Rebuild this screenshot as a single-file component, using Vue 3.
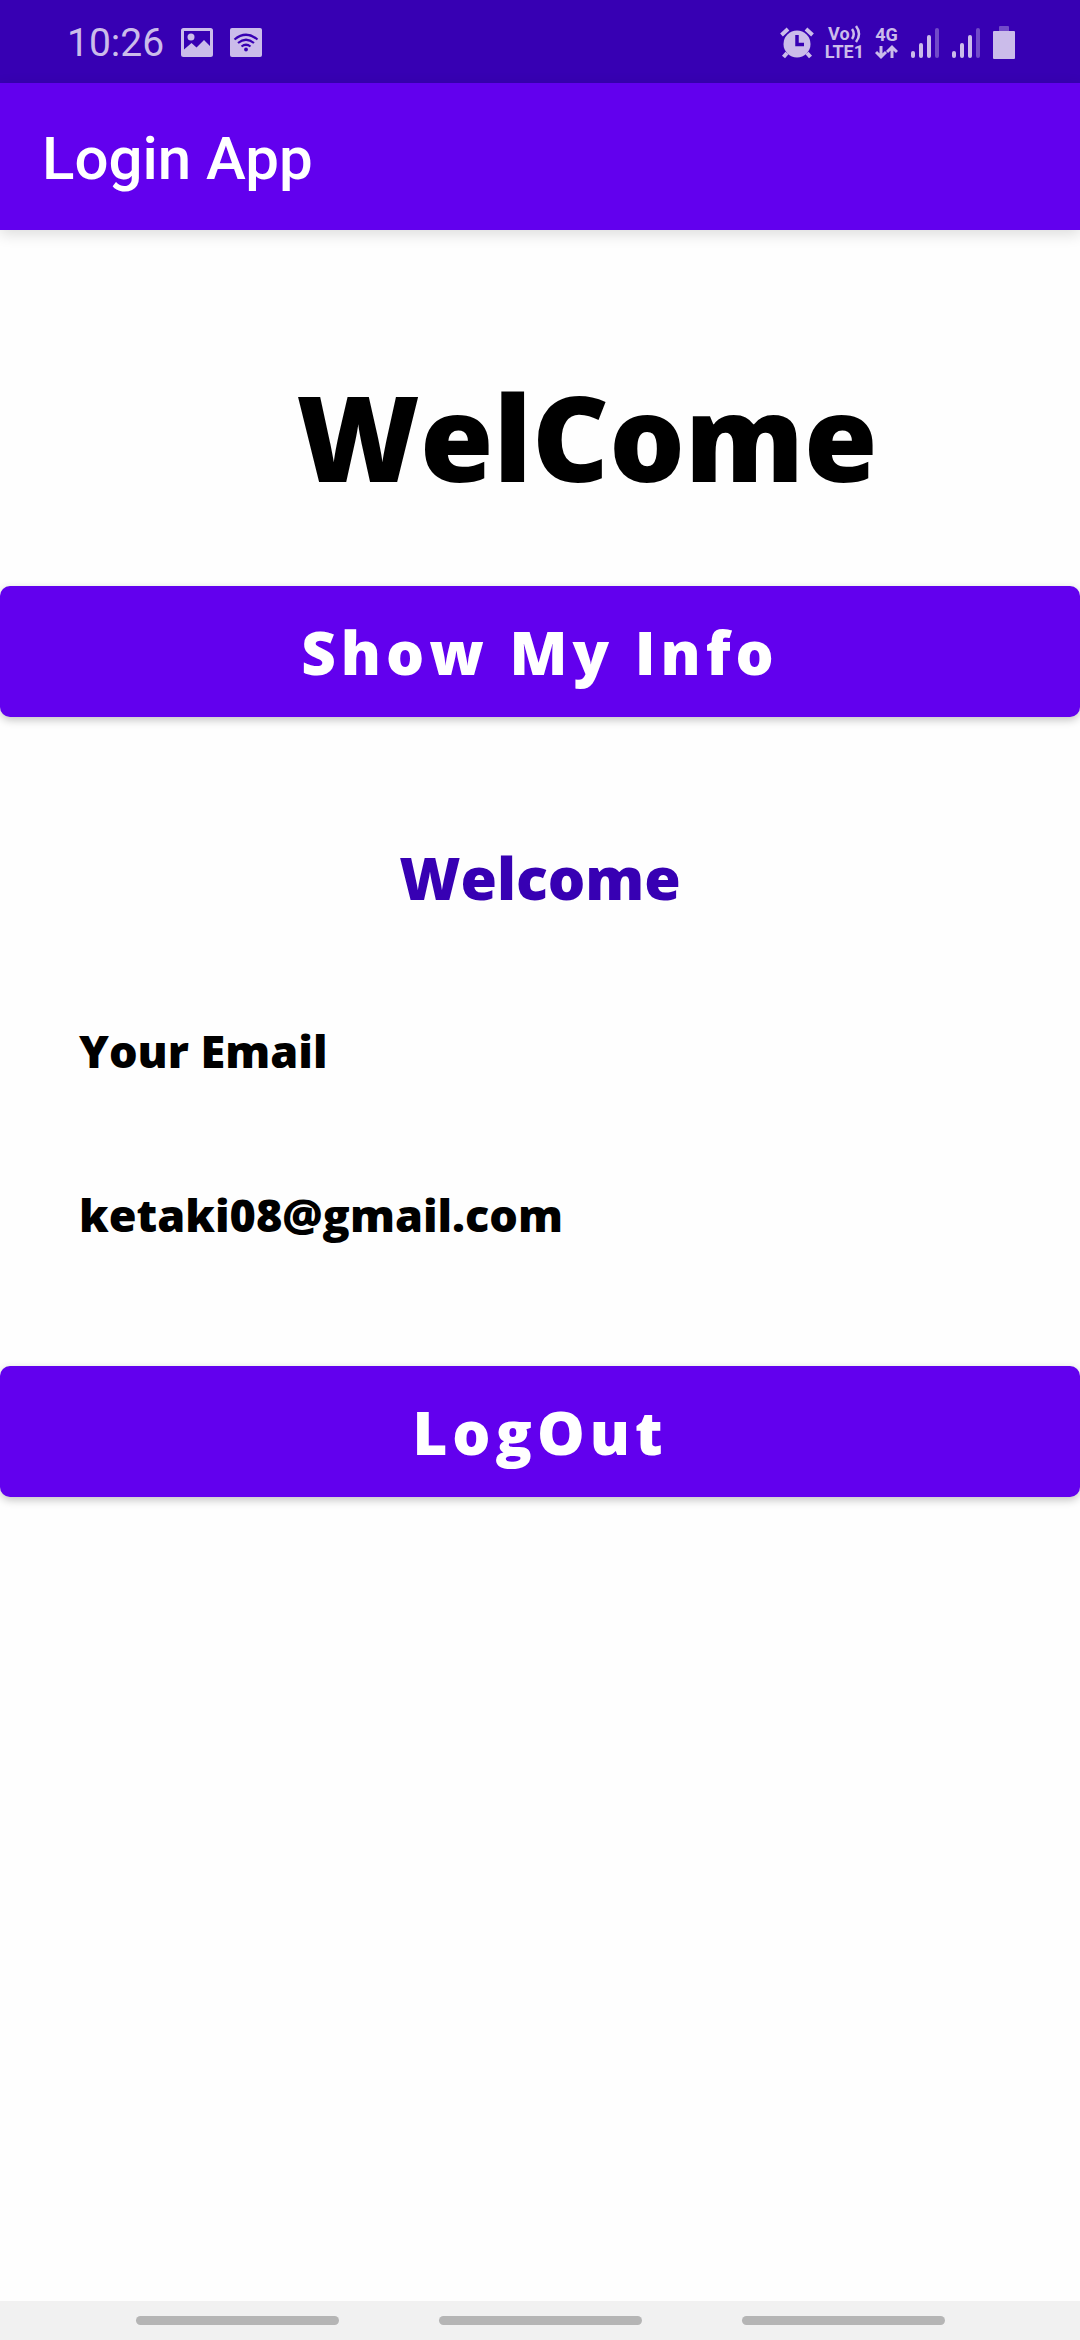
<script setup>
import { ref } from 'vue'

const email = ref('ketaki08@gmail.com')
const signals = ['SIM 1 signal', 'SIM 2 signal']
</script>

<template>
  <div class="screen">
    <div class="status">
      <div class="group left">
        <span class="time">10:26</span>
        <svg width="32" height="30" viewBox="0 0 32 30" aria-hidden="true">
          <path fill="currentColor" fill-rule="evenodd" d="M2.500 0h27a2.500 2.500 0 0 1 2.500 2.500v24a2.500 2.500 0 0 1-2.500 2.500h-27a2.500 2.500 0 0 1-2.500-2.500v-24a2.500 2.500 0 0 1 2.500-2.500zM3 3v18.500l7.500-6.500 5 4.500 7.500-7.500 6 6V3z" />
          <circle cx="10" cy="9" r="3.500" fill="currentColor" />
        </svg>
        <svg width="32" height="30" viewBox="0 0 32 30" aria-hidden="true">
          <rect width="32" height="29" rx="2" fill="currentColor" />
          <g fill="none" stroke="#3700b3" stroke-width="2.200">
            <path d="M4.500 11.500q11.500-9.500 23 0" />
            <path d="M8 15q8-6.500 16 0" />
            <path d="M11.500 18.500q4.500-3.500 9 0" />
          </g>
          <circle cx="16" cy="21.500" r="1.900" fill="#3700b3" />
        </svg>
      </div>
      <div class="group right">
        <svg class="alarm" width="34" height="32" viewBox="0 0 34 32" aria-hidden="true">
          <g stroke="currentColor" stroke-width="4" fill="none">
            <path d="M1.500 8L8 2M32.500 8L26 2" />
            <path d="M7 26l-3.500 4M27 26l3.500 4" />
          </g>
          <circle cx="17" cy="17" r="13.500" fill="currentColor" />
          <path d="M17 8v9.500h7" fill="none" stroke="#3700b3" stroke-width="3.500" />
        </svg>
        <div class="tag">
          <span class="vo">Vo<svg width="10" height="18" viewBox="0 0 10 18" aria-hidden="true">
            <path d="M1 4q3.500 5 0 10M5 1q6 8 0 16" fill="none" stroke="currentColor" stroke-width="2.500" />
          </svg></span>
          <span>LTE1</span>
        </div>
        <div class="tag">
          <span>4G</span>
          <svg width="23" height="16" viewBox="0 0 23 16" aria-hidden="true">
            <path d="M6 2v11M1 8l5 5 5-5M17 14V3M12 8l5-5 5 5" fill="none" stroke="currentColor" stroke-width="3" />
          </svg>
        </div>
        <svg v-for="s in signals" :key="s" class="signal" width="28" height="32" viewBox="0 0 28 32" role="img" :aria-label="s">
          <g fill="currentColor">
            <rect x="0" y="24" width="4" height="7" rx="2" />
            <rect x="8" y="16" width="4" height="15" rx="2" />
            <rect x="16" y="8" width="4" height="23" rx="2" />
            <rect x="24" y="1" width="4" height="30" rx="2" opacity=".4" />
          </g>
        </svg>
        <svg width="22" height="34" viewBox="0 0 22 34" aria-hidden="true">
          <rect x="6" y="0" width="10" height="6" rx="1" fill="currentColor" opacity=".4" />
          <rect x="0" y="5" width="22" height="28" rx="1" fill="currentColor" />
        </svg>
      </div>
    </div>

    <header class="bar">Login App</header>

    <main>
      <h1>WelCome</h1>
      <button class="action" type="button">Show My Info</button>
      <h2>Welcome</h2>
      <p>Your Email</p>
      <p>{{ email }}</p>
      <button class="action logout" type="button">LogOut</button>
    </main>

    <nav>
      <button type="button" aria-label="Recent apps"></button>
      <button type="button" aria-label="Home"></button>
      <button type="button" aria-label="Back"></button>
    </nav>
  </div>
</template>

<style>
body {
  background: #fefefe;
}
</style>

<style scoped>
.screen {
  display: flex;
  flex-direction: column;
  min-height: 100vh;
  font-family: "Open Sans", sans-serif;
  color: #000;
}

svg {
  display: block;
  flex: none;
}

.status {
  display: flex;
  justify-content: space-between;
  align-items: center;
  height: 83px;
  padding: 2px 65px 0 67px;
  box-sizing: border-box;
  background: #3700b3;
  color: #cbbcea;
  font-family: Roboto, sans-serif;
}

.group {
  display: flex;
  align-items: center;
}

.left {
  gap: 17px;
}

.right {
  gap: 11px;
}

.time {
  font-size: 39px;
  line-height: 48px;
}

.tag {
  display: flex;
  flex-direction: column;
  align-items: center;
  font-size: 18px;
  font-weight: 700;
  line-height: 18px;
}

.vo {
  display: flex;
  gap: 1px;
}

.signal {
  margin-left: 2px;
}

.signal + svg {
  margin-left: 2px;
}

.bar {
  height: 147px;
  padding: 2px 42px 0;
  box-sizing: border-box;
  background: #6200ee;
  color: #fff;
  font: 500 60px/147px Roboto, sans-serif;
  box-shadow: 0 4px 14px rgba(0, 0, 0, 0.14);
}

main {
  display: flex;
  flex-direction: column;
  flex: 1;
}

h1 {
  margin: 116px 0 60px;
  padding-left: 94px;
  font-size: 119px;
  font-weight: 800;
  line-height: 180px;
  text-align: center;
}

.action {
  height: 131px;
  padding: 0;
  border: 0;
  border-radius: 10px;
  background: #6200ee;
  color: #fff;
  font: 800 60px/72px "Open Sans", sans-serif;
  letter-spacing: 5px;
  box-shadow: 0 3px 8px rgba(0, 0, 0, 0.24);
}

h2 {
  margin: 120px 0 84px;
  color: #3700b3;
  font-size: 59px;
  font-weight: 800;
  line-height: 80px;
  text-align: center;
}

p {
  margin: 20px 79px 84px;
  font-size: 45px;
  font-weight: 800;
  line-height: 60px;
}

.logout {
  margin-top: 37px;
}

nav {
  display: flex;
  justify-content: center;
  align-items: center;
  gap: 100px;
  height: 39px;
  background: #f1f1f1;
}

nav button {
  width: 203px;
  height: 9px;
  padding: 0;
  border: 0;
  border-radius: 5px;
  background: #b5b5b5;
}
</style>
